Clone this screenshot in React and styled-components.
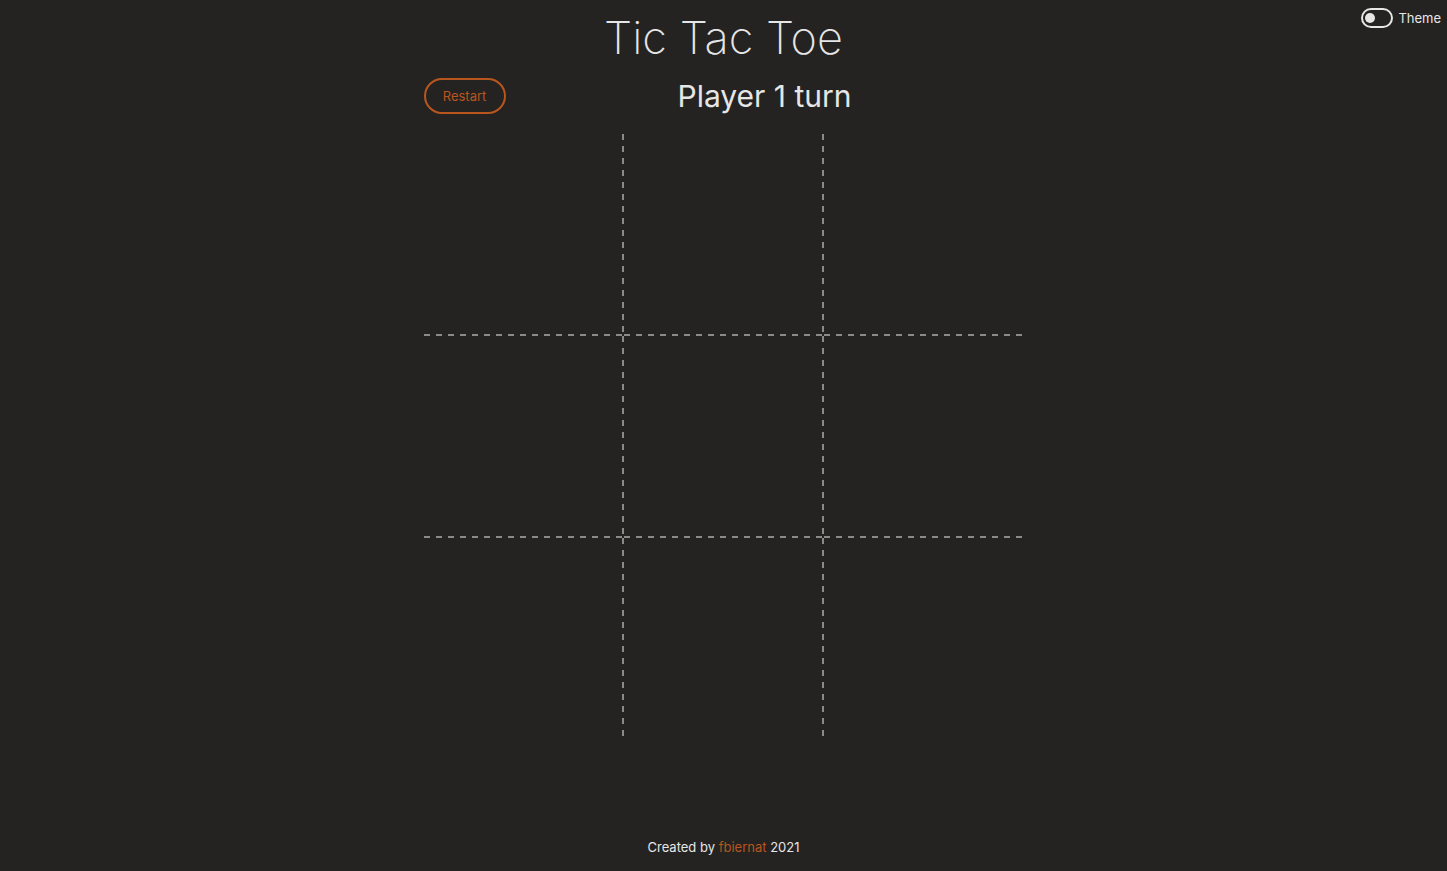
import React, { useState } from "react";
import styled, { createGlobalStyle } from "styled-components";

const GlobalStyle = createGlobalStyle`
  html, body {
    margin: 0;
    padding: 0;
    background: #242322;
  }
  body {
    font-family: "Inter", "Noto Sans", "Liberation Sans", sans-serif;
    color: #e6e6e6;
  }
`;

const lineColor = "#8a8a8a";

const Page = styled.div`
  position: relative;
  min-height: 871px;
  display: flex;
  flex-direction: column;
  align-items: center;
`;

const ThemeSwitch = styled.label`
  position: absolute;
  top: 8px;
  right: 6px;
  display: flex;
  align-items: center;
  gap: 5px;
  font-size: 13px;
  color: #e6e6e6;
  cursor: pointer;
`;

const Track = styled.span`
  width: 24px;
  height: 16px;
  border: 2px solid #e6e6e6;
  border-radius: 10px;
  display: flex;
  align-items: center;
  padding: 0 2px;
  justify-content: ${(p) => (p.on ? "flex-end" : "flex-start")};
`;

const Knob = styled.span`
  width: 10px;
  height: 10px;
  border-radius: 50%;
  background: #e6e6e6;
`;

const Title = styled.h1`
  margin: 12px 0 0;
  font-size: 45px;
  font-weight: 200;
  line-height: 52px;
  color: #e6e6e6;
`;

const Bar = styled.div`
  width: 600px;
  display: flex;
  align-items: center;
  margin-top: 14px;
`;

const RestartButton = styled.button`
  width: 82px;
  height: 36px;
  border: 2px solid #b8561e;
  border-radius: 18px;
  background: transparent;
  color: #b8561e;
  font-family: inherit;
  font-size: 13px;
  cursor: pointer;
`;

const Status = styled.h2`
  flex: 1;
  margin: 0;
  text-align: center;
  font-size: 30px;
  font-weight: 400;
  color: #e6e6e6;
`;

const Board = styled.div`
  margin-top: 20px;
  width: 600px;
  display: grid;
  grid-template-columns: repeat(3, 200px);
  grid-template-rows: 202px 202px 200px;
`;

const Cell = styled.div`
  cursor: pointer;
  background-image: ${(p) =>
    [
      p.col < 2 && `linear-gradient(to bottom, ${lineColor} 50%, transparent 50%)`,
      p.row < 2 && `linear-gradient(to right, ${lineColor} 50%, transparent 50%)`,
    ]
      .filter(Boolean)
      .join(", ") || "none"};
  background-position: ${(p) =>
    [p.col < 2 && "right top", p.row < 2 && "left bottom"].filter(Boolean).join(", ") || "0 0"};
  background-size: ${(p) =>
    [p.col < 2 && "2px 12px", p.row < 2 && "12px 2px"].filter(Boolean).join(", ") || "auto"};
  background-repeat: ${(p) =>
    [p.col < 2 && "repeat-y", p.row < 2 && "repeat-x"].filter(Boolean).join(", ") || "no-repeat"};
`;

const Footer = styled.footer`
  margin-top: auto;
  padding-bottom: 16px;
  font-size: 13px;
  color: #e6e6e6;
`;

const Author = styled.span`
  color: #b8561e;
`;

export default function App() {
  const [dark, setDark] = useState(false);
  return (
    <Page>
      <GlobalStyle />
      <ThemeSwitch onClick={() => setDark(!dark)}>
        <Track on={dark ? 1 : 0}>
          <Knob />
        </Track>
        Theme
      </ThemeSwitch>
      <Title>Tic Tac Toe</Title>
      <Bar>
        <RestartButton>Restart</RestartButton>
        <Status>Player 1 turn</Status>
      </Bar>
      <Board>
        {Array.from({ length: 9 }).map((_, i) => (
          <Cell key={i} row={Math.floor(i / 3)} col={i % 3} />
        ))}
      </Board>
      <Footer>
        Created by <Author>fbiernat</Author> 2021
      </Footer>
    </Page>
  );
}
